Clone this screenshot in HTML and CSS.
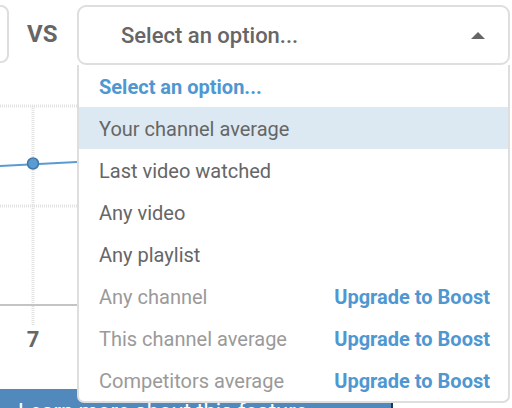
FILE: index.html
```html
<!DOCTYPE html>
<html>
<head>
<meta charset="utf-8">
<link rel="stylesheet" href="styles.css">
</head>
<body>
<div class="page">
  <div class="toolbar">
    <div class="prev-select"></div>
    <div class="vs">VS</div>
    <div class="select">
      <span class="select-label">Select an option...</span>
      <span class="arrow"></span>
    </div>
  </div>
  <svg class="chart" width="512" height="324" viewBox="0 0 512 324">
    <line x1="0" y1="41" x2="77" y2="41" class="grid"/>
    <line x1="0" y1="141" x2="77" y2="141" class="grid"/>
    <line x1="33" y1="41" x2="33" y2="260" class="grid"/>
    <line x1="0" y1="240" x2="77" y2="240" class="axis"/>
    <line x1="0" y1="101" x2="77" y2="97" class="series"/>
    <circle cx="33" cy="98.5" r="5.5" class="point"/>
    <text x="33" y="282" class="tick">7</text>
  </svg>
  <div class="cta">Learn more about this feature</div>
  <ul class="dropdown">
    <li class="opt placeholder">Select an option...</li>
    <li class="opt active">Your channel average</li>
    <li class="opt">Last video watched</li>
    <li class="opt">Any video</li>
    <li class="opt">Any playlist</li>
    <li class="opt disabled"><span>Any channel</span><span class="upgrade">Upgrade to Boost</span></li>
    <li class="opt disabled"><span>This channel average</span><span class="upgrade">Upgrade to Boost</span></li>
    <li class="opt disabled"><span>Competitors average</span><span class="upgrade">Upgrade to Boost</span></li>
  </ul>
</div>
</body>
</html>
```

FILE: styles.css
```css
html, body {
  margin: 0;
  padding: 0;
  background: #fff;
}
body {
  font-family: Roboto, "Liberation Sans", sans-serif;
  width: 512px;
  height: 408px;
  overflow: hidden;
}
.page {
  position: relative;
  width: 512px;
  height: 408px;
}
.toolbar {
  display: flex;
  align-items: flex-start;
  padding-top: 5px;
  height: 60px;
}
.prev-select {
  width: 40px;
  height: 54px;
  margin-left: -35px;
  border: 2px solid #dedede;
  border-radius: 8px;
  flex: none;
}
.vs {
  width: 68px;
  height: 58px;
  line-height: 58px;
  padding-left: 18px;
  box-sizing: border-box;
  font-size: 24px;
  font-weight: 700;
  color: #666;
  flex: none;
}
.select {
  flex: none;
  width: 433px;
  height: 60px;
  box-sizing: border-box;
  border: 2px solid #dedede;
  border-radius: 9px;
  display: flex;
  align-items: center;
  justify-content: space-between;
  padding: 0 23px 0 42px;
}
.select-label {
  font-size: 22px;
  font-weight: 500;
  color: #666;
}
.arrow {
  width: 0;
  height: 0;
  border-left: 7px solid transparent;
  border-right: 7px solid transparent;
  border-bottom: 7px solid #666;
}
.chart {
  display: block;
}
.grid {
  stroke: #e2e2e2;
  stroke-width: 3;
  stroke-dasharray: 1 1;
}
.axis {
  stroke: #c4c4c4;
  stroke-width: 2;
}
.series {
  stroke: #5a9bd2;
  stroke-width: 2;
}
.point {
  fill: #5a9bd2;
  stroke: #3f78a8;
  stroke-width: 1.5;
}
.tick {
  font-family: Roboto, "Liberation Sans", sans-serif;
  font-size: 22px;
  font-weight: 700;
  fill: #666;
  text-anchor: middle;
}
.cta {
  width: 393px;
  height: 30px;
  box-sizing: border-box;
  background: #5289bd;
  border-right: 2px solid #1d3550;
  color: #fff;
  font-size: 22px;
  padding: 11px 0 0 18px;
  line-height: 24px;
  white-space: nowrap;
  overflow: hidden;
}
.dropdown {
  position: absolute;
  left: 77px;
  top: 65px;
  width: 433px;
  box-sizing: border-box;
  margin: 0;
  padding: 0;
  list-style: none;
  background: #fff;
  border: 2px solid #dedede;
  border-top: none;
  border-radius: 0 0 7px 7px;
}
.opt {
  height: 42px;
  box-sizing: border-box;
  display: flex;
  align-items: center;
  justify-content: space-between;
  padding: 2px 18px 0 20px;
  font-size: 20px;
  color: #666;
}
.placeholder {
  color: #4f97d1;
  font-weight: 700;
}
.active {
  background: #dce9f3;
}
.disabled {
  color: #9a9a9a;
}
.upgrade {
  color: #4f97d1;
  font-weight: 700;
}
```
